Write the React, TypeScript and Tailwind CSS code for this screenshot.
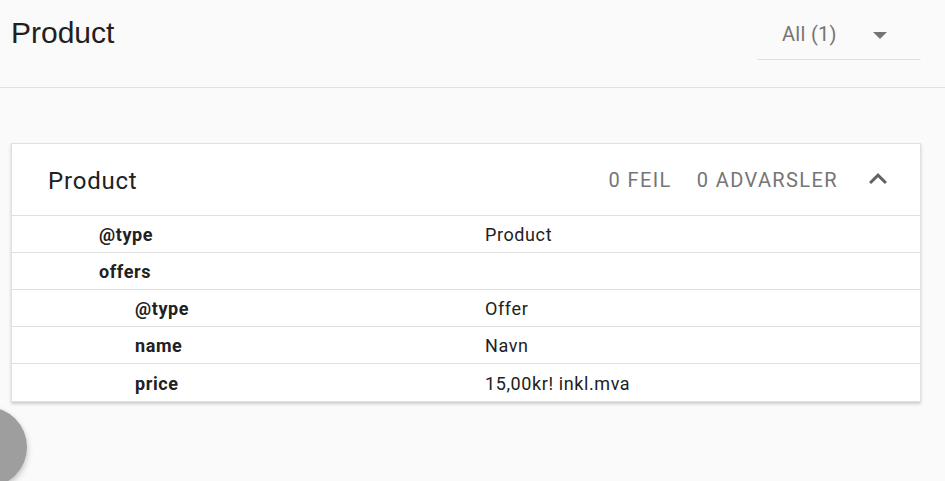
import React from "react";

const rows: { k: string; v: string; level: number }[] = [
  { k: "@type", v: "Product", level: 1 },
  { k: "offers", v: "", level: 1 },
  { k: "@type", v: "Offer", level: 2 },
  { k: "name", v: "Navn", level: 2 },
  { k: "price", v: "15,00kr! inkl.mva", level: 2 },
];

export default function App() {
  return (
    <div className="relative w-[945px] h-[481px] overflow-hidden bg-[#fafafa] font-['Roboto',sans-serif]">
      <header className="h-[88px] border-b border-[#e0e0e0] flex items-start">
        <h1 className="ml-[11px] mt-[15px] text-[30px] leading-[36px] text-[#212121] font-['Liberation_Sans',Arial,sans-serif]">
          Product
        </h1>
        <div className="ml-auto mr-[24px] mt-[14px] w-[164px] h-[46px] border-b border-[#e0e0e0] rounded-b-[2px] flex items-center">
          <span className="ml-[25px] mb-[5px] text-[20px] leading-[24px] tracking-[0.3px] text-[#757575]">All (1)</span>
          <svg width="14" height="7" viewBox="0 0 14 7" className="ml-auto mr-[34px] mb-[2px]">
            <polygon points="0,0 14,0 7,7" fill="#757575" />
          </svg>
        </div>
      </header>

      <section className="ml-[11px] mt-[55px] w-[910px] bg-white border border-[#e0e0e0] shadow-[0_2px_3px_rgba(0,0,0,0.18)]">
        <div className="h-[72px] flex items-center border-b border-[#e0e0e0]">
          <h2 className="ml-[36px] mt-[2px] text-[24px] leading-[30px] tracking-[0.8px] text-[#212121]">Product</h2>
          <div className="ml-auto flex items-center text-[20px] leading-[24px] tracking-[1.4px] text-[#757575] uppercase">
            <span>0 Feil</span>
            <span className="ml-[25px]">0 Advarsler</span>
          </div>
          <svg width="36" height="36" viewBox="0 0 24 24" className="ml-[22px] mr-[24px] mb-[2px]">
            <path d="M12 8l-6 6 1.41 1.41L12 10.83l4.59 4.58L18 14z" fill="#616161" />
          </svg>
        </div>
        {rows.map((r, i) => (
          <div
            key={i}
            className={`h-[37px] flex items-center text-[18px] leading-[24px] tracking-[0.6px] text-[#212121] ${
              i < rows.length - 1 ? "border-b border-[#e0e0e0]" : ""
            }`}
          >
            <div className={`w-[473px] mt-[2px] font-bold ${r.level === 1 ? "pl-[87px]" : "pl-[123px]"}`}>{r.k}</div>
            <div className="mt-[2px]">{r.v}</div>
          </div>
        ))}
      </section>

      <div className="absolute left-[-53px] top-[407px] w-[80px] h-[80px] rounded-full bg-[#9e9e9e] shadow-[0_3px_6px_rgba(0,0,0,0.25)]" />
    </div>
  );
}
